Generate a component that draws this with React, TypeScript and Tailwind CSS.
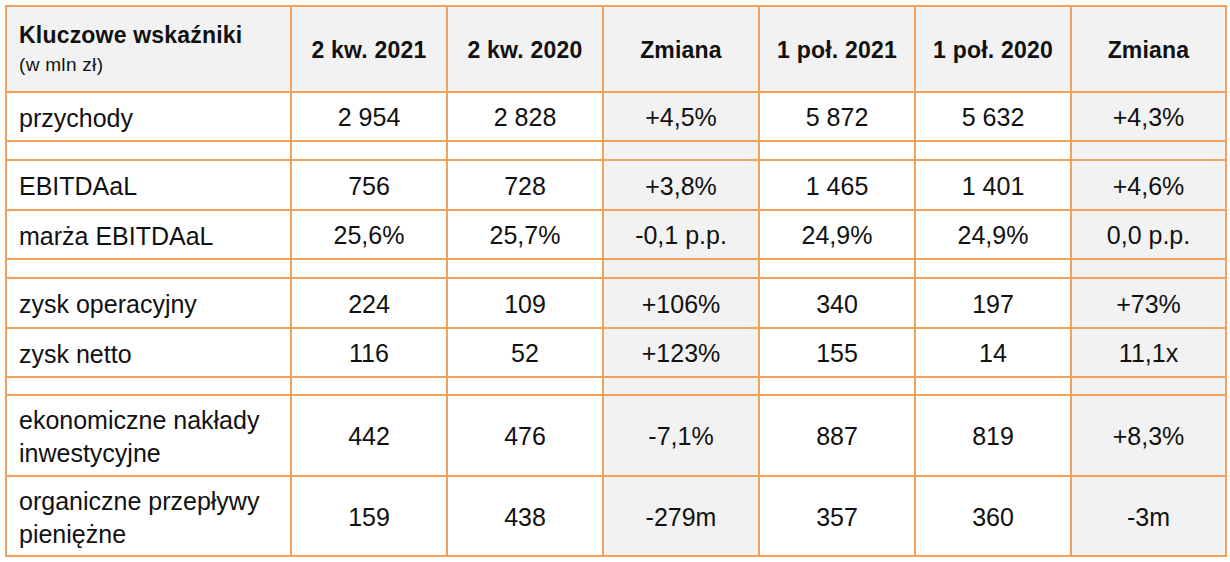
import React from 'react';

type Row = { label: React.ReactNode; values: string[]; h: string } | { spacer: true; h: string };

const rows: Row[] = [
  { label: 'przychody', values: ['2 954', '2 828', '+4,5%', '5 872', '5 632', '+4,3%'], h: 'h-[49px]' },
  { spacer: true, h: 'h-[19px]' },
  { label: 'EBITDAaL', values: ['756', '728', '+3,8%', '1 465', '1 401', '+4,6%'], h: 'h-[50px]' },
  { label: 'marża EBITDAaL', values: ['25,6%', '25,7%', '-0,1 p.p.', '24,9%', '24,9%', '0,0 p.p.'], h: 'h-[49px]' },
  { spacer: true, h: 'h-[19px]' },
  { label: 'zysk operacyjny', values: ['224', '109', '+106%', '340', '197', '+73%'], h: 'h-[50px]' },
  { label: 'zysk netto', values: ['116', '52', '+123%', '155', '14', '11,1x'], h: 'h-[49px]' },
  { spacer: true, h: 'h-[18px]' },
  {
    label: (
      <>
        ekonomiczne nakłady
        <br />
        inwestycyjne
      </>
    ),
    values: ['442', '476', '-7,1%', '887', '819', '+8,3%'],
    h: 'h-[81px]',
  },
  {
    label: (
      <>
        organiczne przepływy
        <br />
        pieniężne
      </>
    ),
    values: ['159', '438', '-279m', '357', '360', '-3m'],
    h: 'h-[80px]',
  },
];

const headers = ['2 kw. 2021', '2 kw. 2020', 'Zmiana', '1 poł. 2021', '1 poł. 2020', 'Zmiana'];
const isChange = (i: number) => i === 2 || i === 5;

export default function App() {
  return (
    <div className="bg-white w-[1230px] h-[562px] pt-[5px] pl-[5px] font-['Liberation_Sans',Arial,sans-serif] text-[#111]">
      <table className="table-fixed border-collapse text-[25px]">
        <colgroup>
          <col className="w-[285px]" />
          <col className="w-[156px]" />
          <col className="w-[156px]" />
          <col className="w-[156px]" />
          <col className="w-[156px]" />
          <col className="w-[156px]" />
          <col className="w-[155px]" />
        </colgroup>
        <thead>
          <tr className="h-[86px] bg-[#f2f2f2] text-[23px] tracking-[0.2px]">
            <th className="border-2 border-[#f5a15e] text-left align-middle pl-[12px] font-bold">
              <div className="leading-[28px]">Kluczowe wskaźniki</div>
              <div className="text-[19px] font-normal leading-[24px] tracking-[0.3px] mt-[4px]">(w mln zł)</div>
            </th>
            {headers.map((h, i) => (
              <th key={i} className="border-2 border-[#f5a15e] text-center font-bold pt-[2px]">
                {h}
              </th>
            ))}
          </tr>
        </thead>
        <tbody>
          {rows.map((r, ri) =>
            'spacer' in r ? (
              <tr key={ri} className={r.h}>
                <td className="border-2 border-[#f5a15e]" />
                {[0, 1, 2, 3, 4, 5].map((i) => (
                  <td key={i} className={`border-2 border-[#f5a15e] ${isChange(i) ? 'bg-[#f2f2f2]' : ''}`} />
                ))}
              </tr>
            ) : (
              <tr key={ri} className={r.h}>
                <td className="border-2 border-[#f5a15e] pl-[12px] pt-[3px] leading-[33px]">{r.label}</td>
                {r.values.map((v, i) => (
                  <td
                    key={i}
                    className={`border-2 border-[#f5a15e] text-center pt-[3px] ${isChange(i) ? 'bg-[#f2f2f2]' : ''}`}
                  >
                    {v}
                  </td>
                ))}
              </tr>
            ),
          )}
        </tbody>
      </table>
    </div>
  );
}
